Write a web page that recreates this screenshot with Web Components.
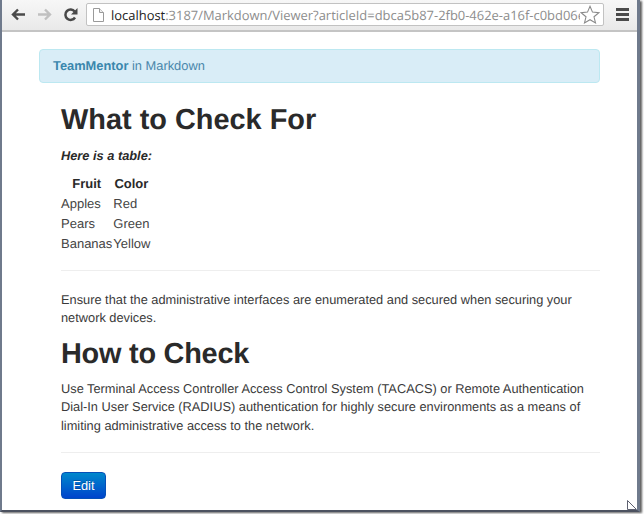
<!DOCTYPE html>
<html>
<head>
<meta charset="utf-8">
<title>What to Check For</title>
<style>
  html, body { margin: 0; padding: 0; background: #fff; }
  body { width: 644px; height: 514px; overflow: hidden; font-family: "Liberation Sans", Arial, sans-serif; text-rendering: geometricPrecision; }
</style>
</head>
<body>
<browser-window>
  <browser-toolbar slot="toolbar" host-part="localhost" rest=":3187/Markdown/Viewer?articleId=dbca5b87-2fb0-462e-a16f-c0bd06e"></browser-toolbar>
  <info-alert><b>TeamMentor</b> in Markdown</info-alert>
  <article-body>
    <h1>What to Check For</h1>
    <p class="lead"><em>Here is a table:</em></p>
    <fruit-table></fruit-table>
    <hr>
    <p class="one">Ensure that the administrative interfaces are enumerated and secured when securing your network devices.</p>
    <h1 class="second">How to Check</h1>
    <p class="two">Use Terminal Access Controller Access Control System (TACACS) or Remote Authentication Dial-In User Service (RADIUS) authentication for highly secure environments as a means of limiting administrative access to the network.</p>
    <hr class="last">
    <edit-button>Edit</edit-button>
  </article-body>
</browser-window>

<script>
const windowTemplate = document.createElement('template');
windowTemplate.innerHTML = `
  <style>
    :host {
      display: flex;
      flex-direction: column;
      box-sizing: border-box;
      width: 644px;
      height: 514px;
      background: #fff;
      position: relative;
    }
    .frame {
      display: flex;
      flex-direction: column;
      width: 640px;
      height: 512px;
      box-sizing: border-box;
      border-left: 2px solid #6f7a8c;
      border-right: 3px solid #6f7a8c;
      border-bottom: 2px solid #4c5260;
      box-shadow: 2px 1px 2px rgba(40,40,40,.75);
      background: #fff;
    }
    .page { flex: 1; min-height: 0; position: relative; }
    .grip { position: absolute; left: 627px; top: 500px; }
  </style>
  <div class="frame">
    <slot name="toolbar"></slot>
    <div class="page"><slot></slot></div>
  </div>
  <svg class="grip" width="11" height="10" viewBox="0 0 11 10">
    <path d="M.5.5v9h9z" fill="#fff" stroke="#5d6070"/>
  </svg>
`;
class BrowserWindow extends HTMLElement {
  constructor() {
    super();
    this.attachShadow({ mode: 'open' });
    this.shadowRoot.appendChild(windowTemplate.content.cloneNode(true));
  }
}
customElements.define('browser-window', BrowserWindow);

const toolbarTemplate = document.createElement('template');
toolbarTemplate.innerHTML = `
  <style>
    :host {
      display: flex;
      align-items: center;
      box-sizing: border-box;
      height: 32px;
      padding: 0 0 1px 9px;
      background: linear-gradient(#f7f7f7, #e9e9e9);
      border-bottom: 2px solid #c4c4c4;
    }
    svg { display: block; flex: none; }
    .nav { margin-right: 11px; }
    .reload { margin-right: 8px; }
    .omnibox {
      display: flex;
      align-items: center;
      box-sizing: border-box;
      width: 518px;
      height: 23px;
      background: #fff;
      border: 1px solid #c2c2c2;
      border-radius: 2px;
      padding-left: 6px;
      overflow: hidden;
      font: 12.950px "Open Sans", "Liberation Sans", sans-serif;
      color: #8d8d8d;
    }
    .url { flex: 1; overflow: hidden; white-space: nowrap; margin-left: 7px; min-width: 0; }
    .url b { font-weight: 400; color: #222; }
    .star { margin: 0 3px 0 0; }
    .menu { margin-left: 12px; }
  </style>
  <svg class="nav" width="15" height="13" viewBox="0 0 15 13">
    <path d="M7 1.5 2 6.5l5 5M2.5 6.5H14" fill="none" stroke="#4a4a4a" stroke-width="2.4"/>
  </svg>
  <svg class="nav" width="15" height="13" viewBox="0 0 15 13">
    <path d="M8 1.5l5 5-5 5M12.5 6.5H1" fill="none" stroke="#c0c0c0" stroke-width="2.4"/>
  </svg>
  <svg class="reload" width="15" height="15" viewBox="0 0 15 15">
    <path d="M12 10.5a5.2 5.2 0 1 1 -.3-6" fill="none" stroke="#484848" stroke-width="2.5"/>
    <path d="M14.5 1v6.5H8z" fill="#484848"/>
  </svg>
  <div class="omnibox">
    <svg width="11" height="14" viewBox="0 0 11 14">
      <path d="M.5.5h6l4 4v9H.5z" fill="#fff" stroke="#9a9a9a"/>
      <path d="M6.5.5v4h4" fill="#eee" stroke="#9a9a9a"/>
    </svg>
    <span class="url"></span>
    <svg class="star" width="20" height="19" viewBox="0 0 20 19">
      <path d="M10 1.3l2.500 5.800 6.300.6-4.800 4.100 1.500 6.100L10 14.700l-5.500 3.200L6 11.800 1.200 7.700l6.300-.6z" fill="#fff" stroke="#8a8a8a" stroke-width="1.100"/>
    </svg>
  </div>
  <svg class="menu" width="13" height="13" viewBox="0 0 13 13">
    <path d="M0 0h13v3H0zM0 5h13v3H0zM0 10h13v3H0z" fill="#4a4a4a"/>
  </svg>
`;
class BrowserToolbar extends HTMLElement {
  constructor() {
    super();
    this.attachShadow({ mode: 'open' });
    this.shadowRoot.appendChild(toolbarTemplate.content.cloneNode(true));
  }
  connectedCallback() {
    const url = this.shadowRoot.querySelector('.url');
    const host = document.createElement('b');
    host.textContent = this.getAttribute('host-part');
    url.appendChild(host);
    url.appendChild(document.createTextNode(this.getAttribute('rest')));
  }
}
customElements.define('browser-toolbar', BrowserToolbar);

const alertTemplate = document.createElement('template');
alertTemplate.innerHTML = `
  <style>
    :host {
      display: block;
      box-sizing: border-box;
      width: 561px;
      height: 34px;
      margin: 17px 0 0 37px;
      padding: 0 13px;
      line-height: 32px;
      font-size: 12.850px;
      color: #4a87ab;
      background: #d9edf7;
      border: 1px solid #bce8f1;
      border-radius: 4px;
    }
    ::slotted(b) { color: #3a87ad; }
  </style>
  <slot></slot>
`;
class InfoAlert extends HTMLElement {
  constructor() {
    super();
    this.attachShadow({ mode: 'open' });
    this.shadowRoot.appendChild(alertTemplate.content.cloneNode(true));
  }
}
customElements.define('info-alert', InfoAlert);

const bodyTemplate = document.createElement('template');
bodyTemplate.innerHTML = `
  <style>
    :host {
      display: block;
      width: 539px;
      margin: 0 0 0 59px;
      font-size: 12.800px;
      line-height: 18.500px;
      color: #3a3a3a;
    }
    ::slotted(h1) {
      margin: 17px 0 0;
      font-size: 28.900px;
      line-height: 40px;
      color: #2a2a2a;
      font-weight: 700;
    }
    ::slotted(h1.second) { margin-top: 6px; letter-spacing: -.25px; }
    ::slotted(p) { margin: 0; }
    ::slotted(p.lead) { margin-top: 7px; font-weight: 700; color: #2a2a2a; font-size: 12.800px; }
    ::slotted(p.one) { margin-top: 20px; }
    ::slotted(p.two) { margin-top: 6px; }
    ::slotted(hr) { margin: 16px 0 0; border: 0; border-top: 1px solid #eee; height: 0; }
    ::slotted(hr.last) { margin-top: 17px; }
  </style>
  <slot></slot>
`;
class ArticleBody extends HTMLElement {
  constructor() {
    super();
    this.attachShadow({ mode: 'open' });
    this.shadowRoot.appendChild(bodyTemplate.content.cloneNode(true));
  }
}
customElements.define('article-body', ArticleBody);

const fruitRows = [['Apples', 'Red'], ['Pears', 'Green'], ['Bananas', 'Yellow']];
const tableTemplate = document.createElement('template');
tableTemplate.innerHTML = `
  <style>
    :host { display: block; margin-top: 8px; }
    table { border-collapse: collapse; border-spacing: 0; line-height: 20px; color: #444; font-size: 13px; }
    th, td { padding: 0; }
    th { color: #2a2a2a; text-align: center; }
    td { text-align: left; }
    td + td { padding-left: 1px; }
  </style>
  <table>
    <thead><tr><th>Fruit</th><th>Color</th></tr></thead>
    <tbody></tbody>
  </table>
`;
class FruitTable extends HTMLElement {
  constructor() {
    super();
    this.attachShadow({ mode: 'open' });
    this.shadowRoot.appendChild(tableTemplate.content.cloneNode(true));
    const tbody = this.shadowRoot.querySelector('tbody');
    for (let row of fruitRows) {
      tbody.innerHTML += `<tr><td>${row[0]}</td><td>${row[1]}</td></tr>`;
    }
  }
}
customElements.define('fruit-table', FruitTable);

const buttonTemplate = document.createElement('template');
buttonTemplate.innerHTML = `
  <style>
    :host { display: block; width: 45px; margin-top: 19px; }
    button {
      display: block;
      box-sizing: border-box;
      width: 45px;
      height: 27px;
      padding: 0;
      font: 12.800px "Liberation Sans", Arial, sans-serif;
      color: #fff;
      background: linear-gradient(#0088cc, #0044cc);
      border: 1px solid #0550b8;
      border-radius: 4px;
      text-shadow: 0 -1px 0 rgba(0,0,0,.25);
    }
  </style>
  <button><slot></slot></button>
`;
class EditButton extends HTMLElement {
  constructor() {
    super();
    this.attachShadow({ mode: 'open' });
    this.shadowRoot.appendChild(buttonTemplate.content.cloneNode(true));
  }
}
customElements.define('edit-button', EditButton);
</script>
</body>
</html>
